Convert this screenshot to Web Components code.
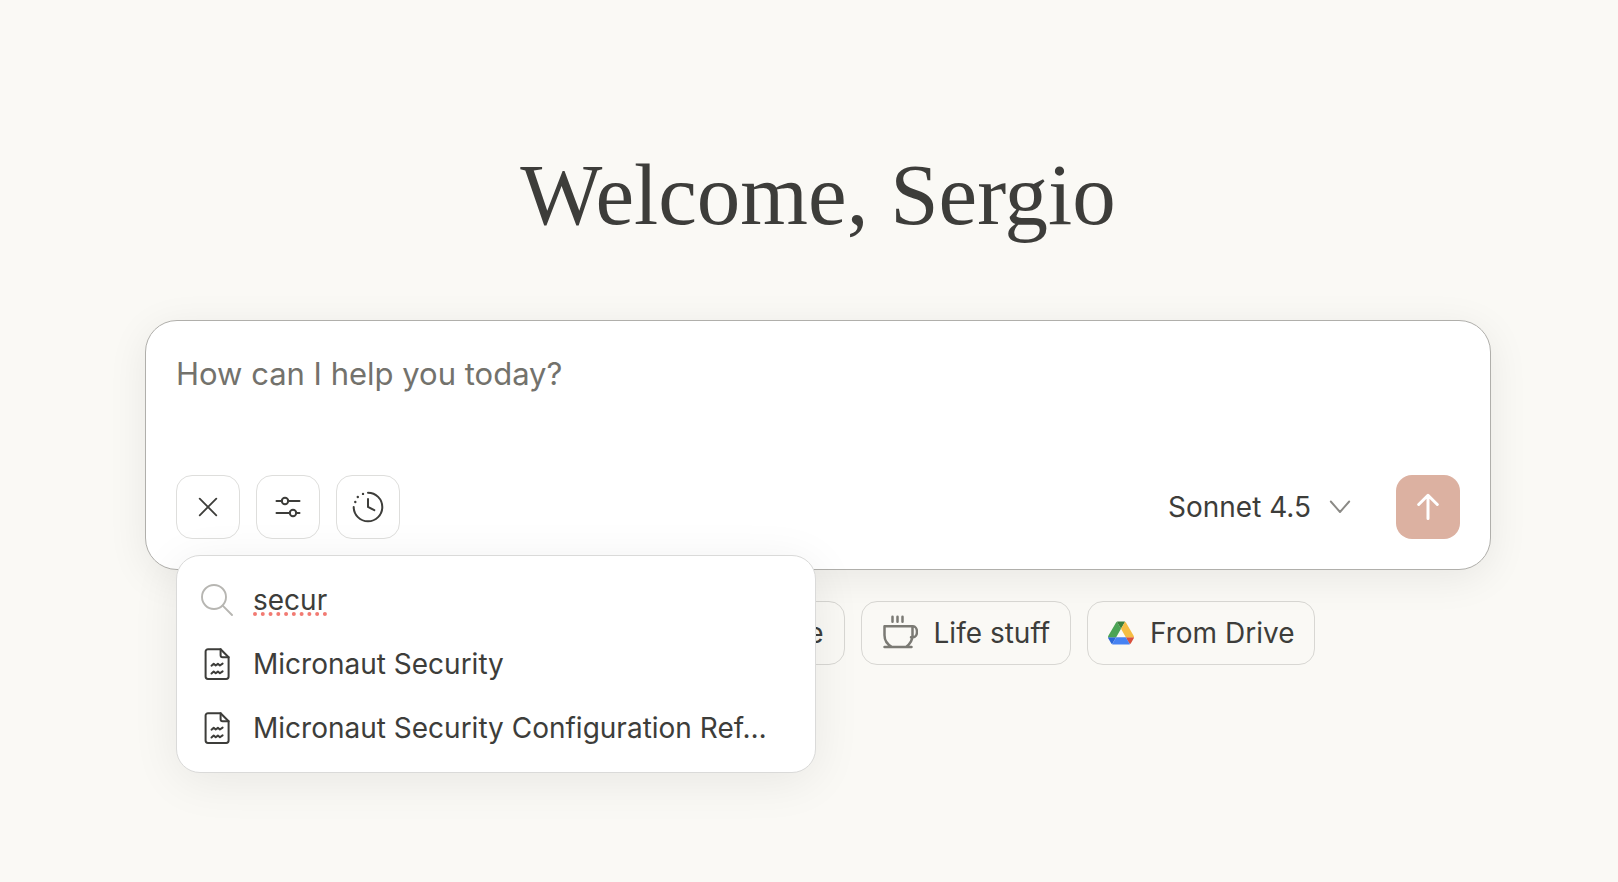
<!DOCTYPE html>
<html lang="en">
<head>
<meta charset="utf-8">
<meta name="viewport" content="width=device-width, initial-scale=1">
<title>New chat</title>
<style>
  body { margin: 0; background: #faf9f5; color: #3d3d3a; font-family: Inter, "Noto Sans", sans-serif; font-size: 28px; }
</style>
</head>
<body>
<chat-home>
  <span slot="greeting">Welcome, Sergio</span>
  <chat-composer>
    <icon-button slot="tools" icon="close" label="Close menu"></icon-button>
    <icon-button slot="tools" icon="sliders" label="Search and tools"></icon-button>
    <icon-button slot="tools" icon="clock" label="Extended thinking"></icon-button>
    <source-menu slot="menu">
      <source-item>Micronaut Security</source-item>
      <source-item>Micronaut Security Configuration Ref…</source-item>
    </source-menu>
  </chat-composer>
  <prompt-chip slot="chips" icon="pen">Write</prompt-chip>
  <prompt-chip slot="chips" icon="cap">Learn</prompt-chip>
  <prompt-chip slot="chips" icon="code">Code</prompt-chip>
  <prompt-chip slot="chips" icon="cup">Life stuff</prompt-chip>
  <prompt-chip slot="chips" icon="drive">From Drive</prompt-chip>
</chat-home>

<script>
const svg = (w, h, body, width = 2, vb = `0 0 ${w} ${h}`) =>
  `<svg aria-hidden="true" width="${w}" height="${h}" viewBox="${vb}" fill="none" stroke="currentColor" stroke-width="${width}" stroke-linecap="round" stroke-linejoin="round">${body}</svg>`;

const ICONS = {
  close: svg(36, 36, '<path d="M9.7 9.7l16.6 16.6M26.3 9.7L9.7 26.3"/>', 1.8),
  sliders: svg(36, 36, '<path d="M6.5 12h5.5M18.5 12h11M6.5 24H20M26.5 24h3"/><circle cx="15" cy="12" r="3.2"/><circle cx="23" cy="24" r="3.2"/>', 2),
  clock: svg(36, 36, '<path d="M18 3.7A14.3 14.3 0 1 1 3.7 18"/><path d="M18 10v8l6.3 3.2" stroke-linejoin="miter"/><g fill="currentColor" stroke="none"><circle cx="13" cy="4.9" r="1.2"/><circle cx="7.8" cy="8" r="1.2"/><circle cx="5.3" cy="13" r="1.2"/></g>', 2),
  search: svg(32, 32, '<circle cx="13" cy="13" r="12"/><path d="M21.7 21.7L31 31"/>', 1.9),
  file: svg(32, 32, '<path d="M19.6 1.2H7a2.4 2.4 0 0 0-2.4 2.4v25A2.4 2.4 0 0 0 7 31h18.2a2.4 2.4 0 0 0 2.4-2.4V9.2z"/><path d="M19.6 1.2v6a2 2 0 0 0 2 2h6"/><path d="M10.5 17.7l2.2-1.9 2 1.7 2.2-1.7 2 1.7 2.7-1.9M10.5 25.5l2.2-1.9 2 1.7 2.2-1.7 2 1.7 2.7-1.9"/>', 2),
  chevron: svg(24, 24, '<path d="M2.8 6.5L12 17l9.2-10.5"/>', 1.9),
  send: svg(36, 36, '<path d="M18 29.5V6.5M8.7 15.5L18 6.3l9.3 9.2"/>', 3),
  cup: svg(36, 36, '<path d="M2.5 11.3h28v9c0 5-3 9.2-6.5 11.7H10c-4.7-2.5-7.5-6.7-7.5-11.7zM28.5 11.3H31a4 5.500 0 0 1 0 11h-2M2.500 32h27M10.500 1.800v5M15.500 1.800v5M20.500 1.800v5"/>', 2.500),
  pen: svg(34, 34, '<path d="M5 29l2-7L23 6l5 5-15 16zM20 9l5 5"/>'),
  cap: svg(34, 34, '<path d="M3 13l14-7 14 7-14 7zM9 16v8c5 4 11 4 16 0v-8"/>'),
  code: svg(34, 34, '<path d="M12 9l-8 8 8 8M22 9l8 8-8 8"/>'),
  drive: svg(26, 24, '<g stroke="none"><path fill="#2c67d8" d="M6.600 66.850l3.850 6.650c.8 1.400 1.950 2.500 3.300 3.300L27.500 53H0c0 1.550.4 3.100 1.200 4.500z"/><path fill="#4ba455" d="M43.650 25L29.900 1.200c-1.350.8-2.500 1.900-3.300 3.300L1.200 48.500A9 9 0 0 0 0 53h27.500z"/><path fill="#d9503d" d="M73.550 76.800c1.350-.8 2.500-1.900 3.300-3.300l1.600-2.750 7.650-13.250c.8-1.400 1.200-2.950 1.200-4.500H59.800l5.850 11.500z"/><path fill="#3b803c" d="M43.650 25L57.400 1.200C56.050.4 54.500 0 52.900 0H34.400c-1.600 0-3.150.45-4.500 1.200z"/><path fill="#4682f2" d="M59.800 53H27.500L13.750 76.800c1.350.8 2.900 1.200 4.500 1.200h50.800c1.600 0 3.150-.45 4.500-1.200z"/><path fill="#f5bd42" d="M73.400 26.500L60.700 4.500c-.8-1.400-1.950-2.500-3.300-3.300L43.650 25 59.800 53h27.450c0-1.550-.4-3.100-1.200-4.500z"/></g>', 1, '0 0 87.300 78')
};

const define = (name, html, setup) => customElements.define(name, class extends HTMLElement {
  constructor() {
    super();
    const root = this.attachShadow({ mode: 'open' });
    root.innerHTML = html;
    root.querySelectorAll('[data-icon]').forEach(n => { n.innerHTML = ICONS[n.dataset.icon]; });
  }
  connectedCallback() { if (setup) setup(this, this.shadowRoot); }
});

define('chat-home', `
  <style>
    :host { display: block; }
    main { box-sizing: border-box; min-height: 100vh; padding: 147px 127px 200px 145px; }
    h1 { margin: 0 0 77px; text-align: center; font: 400 87px/96px "Liberation Serif", serif; }
    nav { display: flex; flex-wrap: wrap; justify-content: center; gap: 16px; margin-top: 31px; }
  </style>
  <main>
    <h1><slot name="greeting"></slot></h1>
    <slot></slot>
    <nav aria-label="Suggestions"><slot name="chips"></slot></nav>
  </main>`);

define('chat-composer', `
  <style>
    :host { display: block; position: relative; z-index: 1; }
    form { border: 1px solid #b0afab; border-radius: 32px; padding: 30px; background: #fff; box-shadow: 0 8px 40px rgba(0,0,0,.075); }
    textarea { display: block; box-sizing: border-box; width: 100%; height: 44px; margin: 0 0 80px; padding: 0; border: 0; outline: 0; resize: none; overflow: hidden; background: none; color: inherit; font: inherit; font-size: 31px; line-height: 46px; }
    textarea::placeholder { color: #73726c; opacity: 1; }
    .bar { position: relative; display: flex; align-items: center; gap: 16px; }
    .menu { position: absolute; left: 0; top: calc(100% + 16px); width: 640px; max-width: 100%; }
    .model { display: flex; align-items: center; gap: 16px; margin-left: auto; margin-right: 28px; color: #8b8a86; }
    select { appearance: none; margin: 0; padding: 0; border: 0; background: none; color: #3d3d3a; font: inherit; line-height: 40px; }
    .model span, .send span { display: flex; }
    .send { display: flex; align-items: center; justify-content: center; width: 64px; height: 64px; padding: 0; border: 0; border-radius: 16px; background: #dcb1a1; color: #fff; }
  </style>
  <form>
    <textarea rows="1" aria-label="Message" placeholder="How can I help you today?"></textarea>
    <div class="bar">
      <slot name="tools"></slot>
      <label class="model"><select aria-label="Model"><option>Sonnet 4.5</option></select><span data-icon="chevron"></span></label>
      <button class="send" type="button" aria-label="Send message"><span data-icon="send"></span></button>
      <div class="menu"><slot name="menu"></slot></div>
    </div>
  </form>`);

define('icon-button', `
  <style>
    :host { display: block; }
    button { display: flex; align-items: center; justify-content: center; box-sizing: border-box; width: 64px; height: 64px; padding: 0; border: 1px solid #dededc; border-radius: 16px; background: none; color: #3d3d3a; }
  </style>
  <button type="button"></button>`, (el, root) => {
    const b = root.querySelector('button');
    b.setAttribute('aria-label', el.getAttribute('label'));
    b.innerHTML = ICONS[el.getAttribute('icon')];
  });

define('source-menu', `
  <style>
    :host { display: block; box-sizing: border-box; padding: 12px; border: 1px solid #dadad9; border-radius: 24px; background: #fff; box-shadow: 0 8px 48px rgba(0,0,0,.075); }
    label { display: flex; align-items: center; gap: 20px; height: 64px; padding: 0 12px; }
    span { display: flex; color: #b7b6b2; }
    input { flex: 1; min-width: 0; height: 48px; padding: 0; border: 0; outline: 0; background: none; color: #3d3d3a; font: inherit; text-decoration: underline dotted #f27a72 4px; text-underline-offset: 2px; text-decoration-skip-ink: none; }
  </style>
  <label><span data-icon="search"></span><input type="text" aria-label="Search sources" value="secur" spellcheck="false"></label>
  <slot></slot>`);

define('source-item', `
  <style>
    :host { display: block; }
    button { display: flex; align-items: center; gap: 20px; width: 100%; height: 64px; padding: 0 12px; border: 0; background: none; color: #3d3d3a; font: inherit; text-align: left; }
    .icon { display: flex; }
    .name { min-width: 0; overflow: hidden; white-space: nowrap; text-overflow: ellipsis; }
  </style>
  <button type="button"><span class="icon" data-icon="file"></span><span class="name"><slot></slot></span></button>`);

define('prompt-chip', `
  <style>
    :host { display: block; }
    button { display: flex; align-items: center; gap: 16px; height: 64px; padding: 0 20px; border: 1px solid #d8d7d3; border-radius: 16px; background: none; color: #3d3d3a; font: inherit; white-space: nowrap; }
    .icon { display: flex; color: #7b7a74; }
  </style>
  <button type="button"><span class="icon"></span><slot></slot></button>`, (el, root) => {
    root.querySelector('.icon').innerHTML = ICONS[el.getAttribute('icon')];
  });
</script>
</body>
</html>
